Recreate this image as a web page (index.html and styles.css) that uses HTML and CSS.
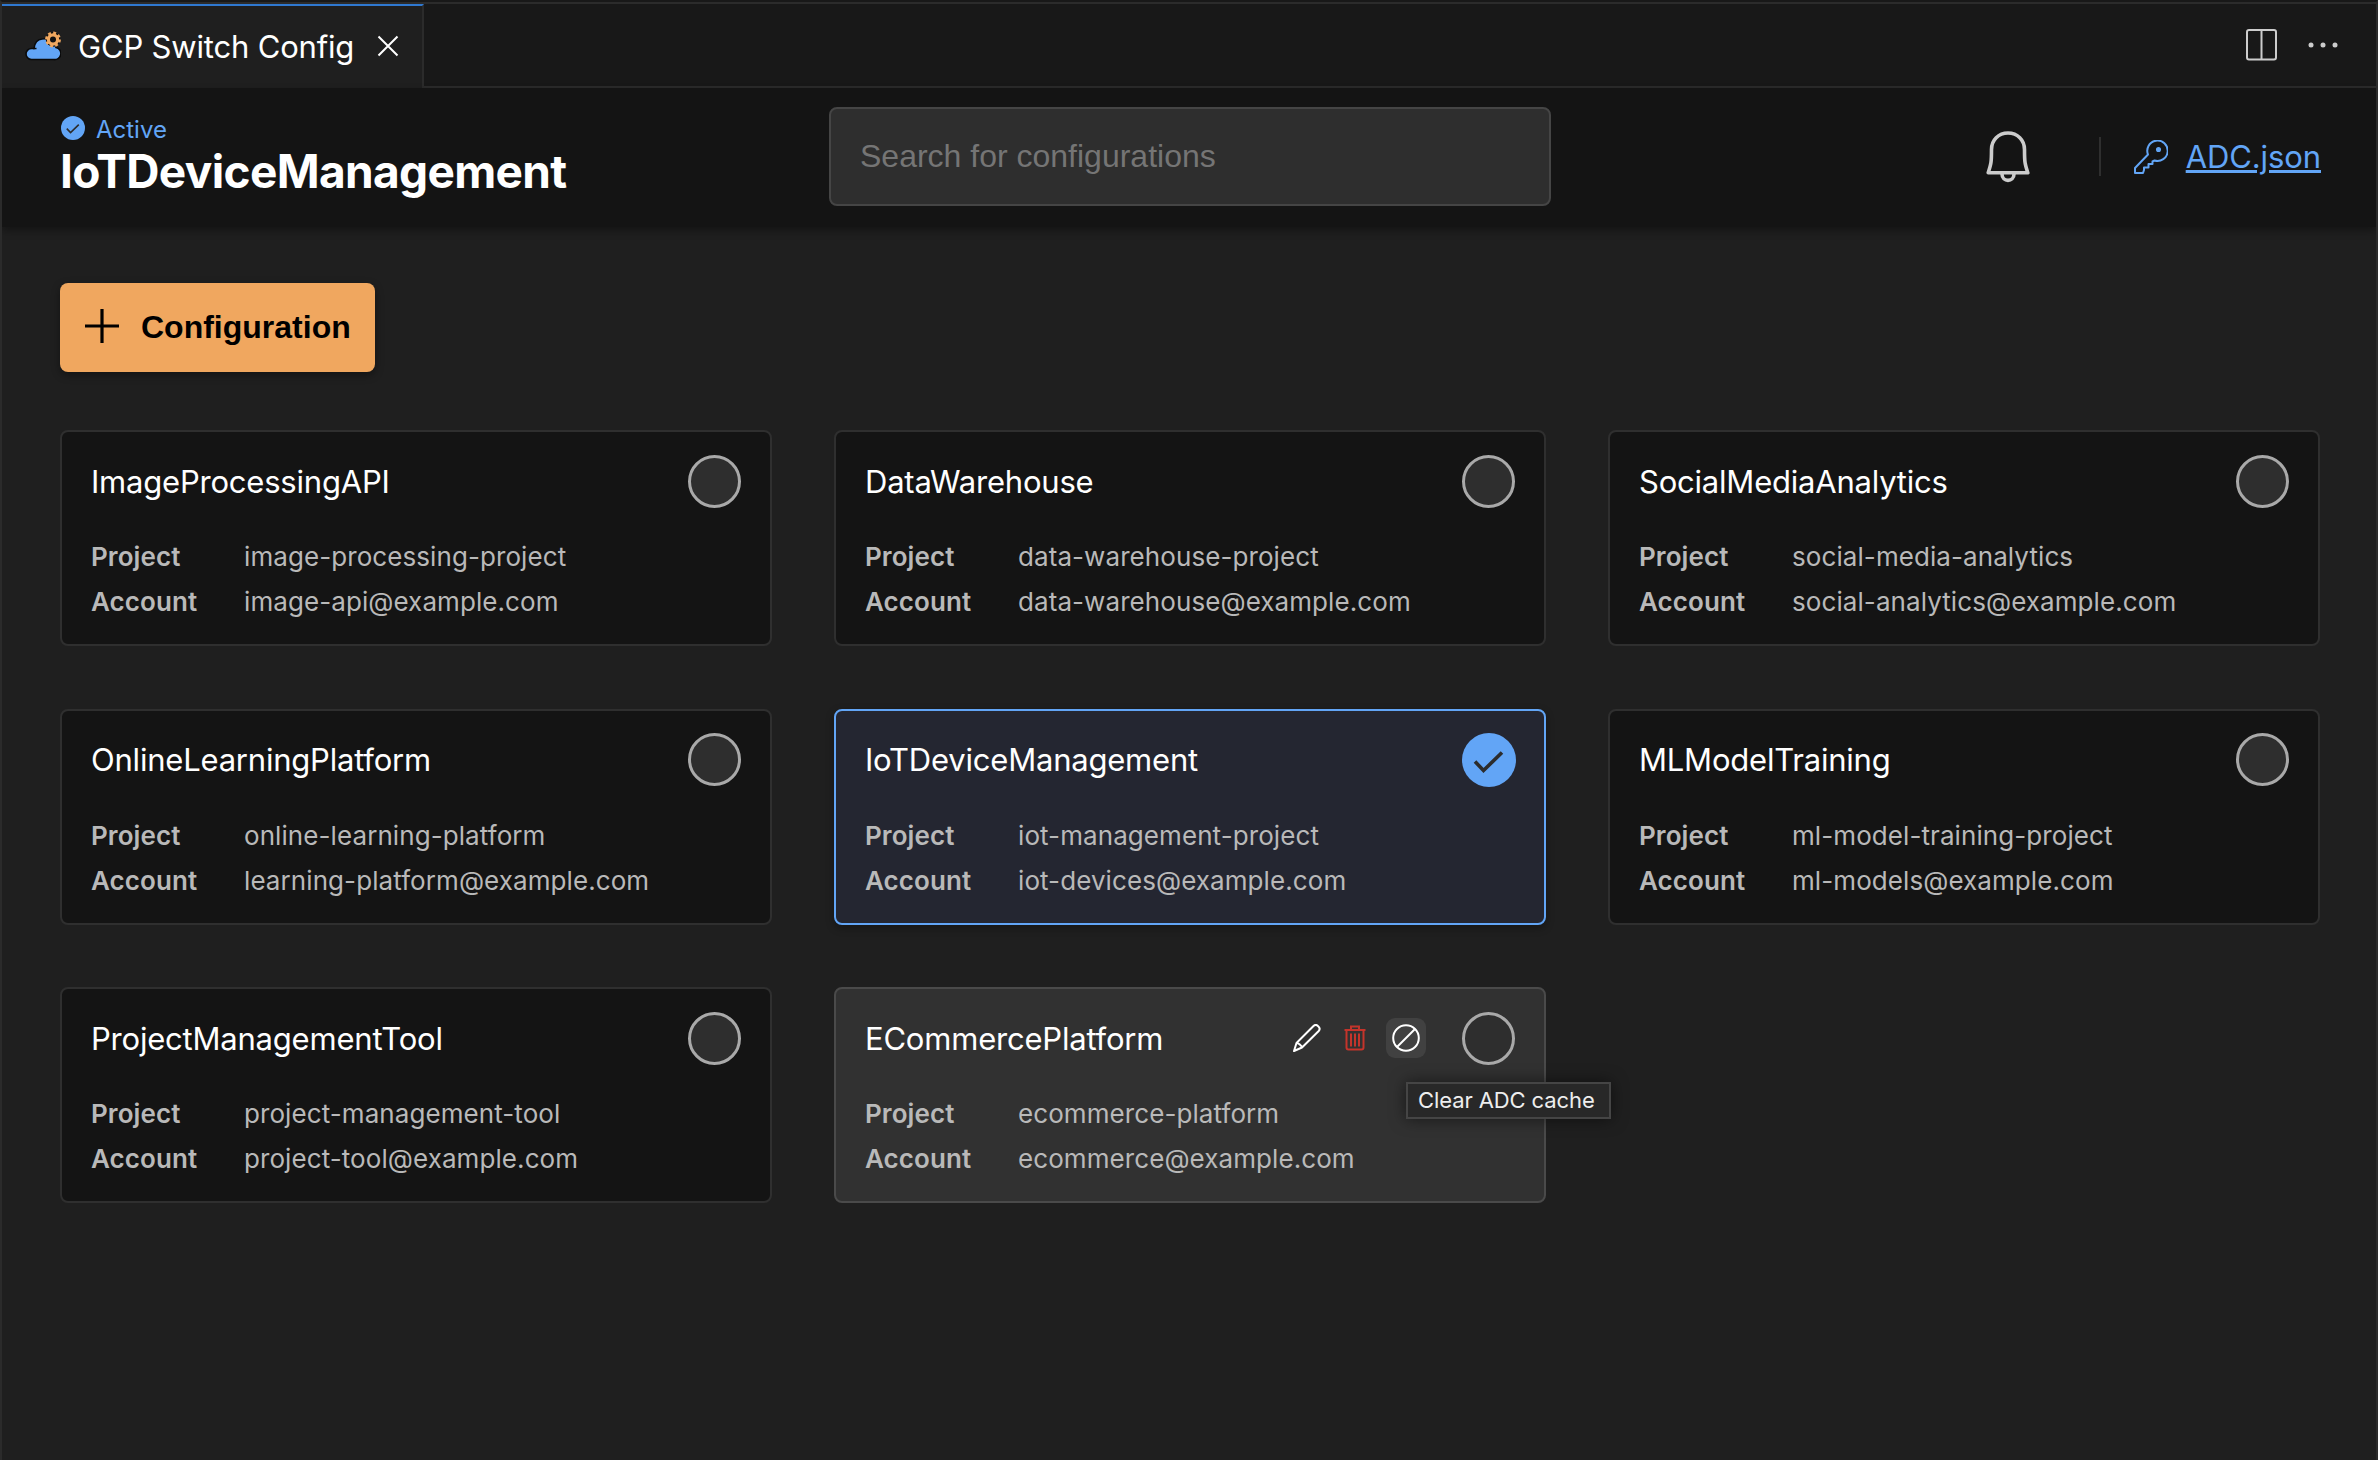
FILE: index.html
```html
<!DOCTYPE html>
<html lang="en">
<head>
<meta charset="utf-8">
<title>GCP Switch Config</title>
<link rel="stylesheet" href="styles.css">
</head>
<body>
<svg class="defs" width="0" height="0"><symbol id="check" viewBox="0 0 54 54"><circle cx="27" cy="27" r="27" fill="#62a5f6"/><path d="M13 28.5L21.5 37.500L40 19.500" fill="none" stroke="#2c2c2c" stroke-width="3.600"/></symbol></svg>
<div class="window">
<div class="tabs">
  <div class="tab">
    <svg class="tab-icon" viewBox="0 0 36 30"><path d="M6.500 28.500H28.500A6 6 0 0 0 31 16.500C29 10 23 7 17 8C12 8.500 9.500 12.500 9 17.500H6.500A5.500 5.500 0 0 0 6.500 28.500Z" fill="#62a5f6" stroke="#0a0a0a" stroke-width="1.600"/><path d="M8 17.500H11.500" stroke="#0a0a0a" stroke-width="1.500"/><circle cx="28" cy="8.500" r="7.200" fill="#0a0a0a"/><circle cx="28" cy="8.500" r="6.700" fill="none" stroke="#f0a860" stroke-width="2.400" stroke-dasharray="2.900 2.362"/><circle cx="28" cy="8.500" r="4.600" fill="#111" stroke="#f0a860" stroke-width="3.200"/></svg>
    <span class="tab-label">GCP Switch Config</span>
    <svg class="close" viewBox="0 0 22 22"><path d="M1.500 1.500L20.500 20.500M20.500 1.500L1.500 20.500" stroke="#fff" stroke-width="2"/></svg>
  </div>
  <div class="tab-actions">
    <svg width="32" height="32" viewBox="0 0 32 32" fill="none" stroke="#ccc" stroke-width="2"><rect x="1" y="1" width="29" height="29.500" rx="2"/><path d="M15.500 1V30"/></svg>
    <svg width="30" height="8" viewBox="0 0 30 8" fill="#ccc"><circle cx="3" cy="4" r="2.500"/><circle cx="15" cy="4" r="2.500"/><circle cx="27" cy="4" r="2.500"/></svg>
  </div>
</div>
<header class="header">
  <div class="current">
    <div class="status"><svg width="24" height="24"><use href="#check"/></svg><span>Active</span></div>
    <h1>IoTDeviceManagement</h1>
  </div>
  <div class="search"><span>Search for configurations</span></div>
  <div class="tools">
    <svg class="bell" viewBox="0 0 44 52" fill="none" stroke="#ccc" stroke-width="3.600" stroke-linejoin="round"><path d="M5.500 18.500C5.500 9 12.500 2 22 2S38.500 9 38.500 18.500C38.500 32 39 33 41.800 41.800H2.200C5 33 5.500 32 5.500 18.500Z"/><path d="M16 43C16 51.500 28 51.500 28 43"/></svg>
    <i class="divider"></i>
    <svg class="key" viewBox="0 0 34 34" fill="none" stroke="#62a5f6" stroke-width="2" stroke-linejoin="round"><path d="M14 14.500A10.200 10.200 0 1 1 20.500 20.500L18.500 21.500V24H14.500V27.500H10V30L9 33H1V28Z"/><circle cx="24.500" cy="9.500" r="1.800" fill="#62a5f6" stroke-width="1.500"/></svg>
    <a>ADC.json</a>
  </div>
</header>
<main>
  <button class="add"><svg width="34" height="34" viewBox="0 0 34 34"><path d="M17 0V34M0 17H34" stroke="#000" stroke-width="3.200"/></svg><span>Configuration</span></button>
  <div class="grid">
    <section class="card"><div class="card-head"><h2>ImageProcessingAPI</h2><i class="radio"></i></div><dl><dt>Project</dt><dd>image-processing-project</dd><dt>Account</dt><dd>image-api@example.com</dd></dl></section>
    <section class="card"><div class="card-head"><h2>DataWarehouse</h2><i class="radio"></i></div><dl><dt>Project</dt><dd>data-warehouse-project</dd><dt>Account</dt><dd>data-warehouse@example.com</dd></dl></section>
    <section class="card"><div class="card-head"><h2>SocialMediaAnalytics</h2><i class="radio"></i></div><dl><dt>Project</dt><dd>social-media-analytics</dd><dt>Account</dt><dd>social-analytics@example.com</dd></dl></section>
    <section class="card"><div class="card-head"><h2>OnlineLearningPlatform</h2><i class="radio"></i></div><dl><dt>Project</dt><dd>online-learning-platform</dd><dt>Account</dt><dd>learning-platform@example.com</dd></dl></section>
    <section class="card active"><div class="card-head"><h2>IoTDeviceManagement</h2><svg class="checked"><use href="#check"/></svg></div><dl><dt>Project</dt><dd>iot-management-project</dd><dt>Account</dt><dd>iot-devices@example.com</dd></dl></section>
    <section class="card"><div class="card-head"><h2>MLModelTraining</h2><i class="radio"></i></div><dl><dt>Project</dt><dd>ml-model-training-project</dd><dt>Account</dt><dd>ml-models@example.com</dd></dl></section>
    <section class="card"><div class="card-head"><h2>ProjectManagementTool</h2><i class="radio"></i></div><dl><dt>Project</dt><dd>project-management-tool</dd><dt>Account</dt><dd>project-tool@example.com</dd></dl></section>
    <section class="card hover"><div class="card-head"><h2>ECommercePlatform</h2>
      <div class="actions">
        <svg width="28" height="28" viewBox="0 0 28 28" fill="none" stroke="#fff" stroke-width="2" stroke-linejoin="round"><path d="M1 27L3.500 19L20.500 2C22 0.500 24 1 25.200 2.200C27 3.800 27 5.500 25.700 7L9 23.500ZM3.500 19C5.500 19 8.500 21.500 9 23.500"/></svg>
        <svg width="22" height="26" viewBox="0 0 22 26" fill="none" stroke="#c4342b" stroke-width="2"><path d="M0.500 5H21.500M7 5V1.500H15V5M2.500 5V22.500Q2.500 24.500 4.500 24.500H17.500Q19.500 24.500 19.500 22.500V5M7 8.500V21.500M11 8.500V21.500M15 8.500V21.500"/></svg>
        <div class="clear"><svg width="28" height="28" viewBox="0 0 28 28" fill="none" stroke="#fff" stroke-width="2"><circle cx="14" cy="14" r="12.800"/><path d="M5 23L23 5"/></svg><div class="tooltip">Clear ADC cache</div></div>
      </div>
      <i class="radio"></i></div><dl><dt>Project</dt><dd>ecommerce-platform</dd><dt>Account</dt><dd>ecommerce@example.com</dd></dl></section>
  </div>
</main>
</div>
</body>
</html>
```
FILE: styles.css
```css
* { box-sizing: border-box; }
body { margin: 0; background: #1f1f1f; color: #fff; font-family: Inter, sans-serif; }
h1, h2, dl, dd { margin: 0; }
svg { display: block; flex: none; }
.defs { position: absolute; }
.window { height: 1460px; border: 2px solid #2b2b2b; border-width: 2px 2px 0; border-top-color: #181818; overflow: hidden; }
.tabs { display: flex; height: 86px; border-top: 2px solid #2b2b2b; background: #181818; }
.tab { display: flex; align-items: center; width: 422px; padding: 0 23px 2px 23px; border-top: 2px solid #2f78d0; border-right: 2px solid #2b2b2b; background: #1f1f1f; }
.tab-icon { width: 36px; height: 30px; }
.tab-label { margin-left: 17px; font-size: 31px; letter-spacing: -0.18px; }
.close { width: 22px; height: 22px; margin-left: auto; }
.tab-actions { flex: 1; display: flex; align-items: center; justify-content: flex-end; gap: 30px; padding: 0 38px 0 0; border-bottom: 2px solid #2b2b2b; }
.header { position: relative; display: flex; height: 139px; padding: 0 55px 0 58px; background: #141414; box-shadow: 0 4px 8px #0005; }
.current { width: 769px; padding-top: 27px; }
.status { display: flex; gap: 11px; padding-left: 1px; color: #62a5f6; font-size: 24px; line-height: 30px; }
.status svg { margin-top: 1px; }
h1 { font-size: 46px; line-height: 52px; letter-spacing: -0.65px; }
.search { width: 722px; height: 99px; margin-top: 19px; padding: 1px 29px 0; border: 2px solid #454545; border-radius: 8px; background: #2e2e2e; color: #757575; font: 32px/93px "Liberation Sans", sans-serif; }
.tools { flex: 1; display: flex; align-items: center; justify-content: flex-end; padding-bottom: 2px; color: #62a5f6; font-size: 31px; letter-spacing: -0.1px; }
.bell { width: 44px; height: 52px; }
.divider { width: 2px; height: 39px; margin: 0 33px 0 69px; background: #2f2f2f; }
.key { width: 34px; height: 34px; margin-right: 18px; }
.tools a { text-decoration: underline; text-decoration-thickness: 3px; }
main { padding: 56px 56px 0 58px; }
.add { display: flex; align-items: center; gap: 22px; width: 315px; height: 89px; padding: 0 0 0 25px; border: 0; border-radius: 8px; background: #f0a75f; color: #000; font: bold 32px "Liberation Sans", sans-serif; box-shadow: 0 3px 8px #0006; }
.add svg { margin-top: -3px; }
.grid { display: grid; grid-template-columns: repeat(3, 1fr); gap: 62.500px 62px; margin-top: 58px; }
.card { height: 216px; padding: 22px 28px 22px 29px; border: 2px solid #2f2f2f; border-radius: 8px; background: #141414; }
.card.active { border-color: #62a5f6; background: #242631; box-shadow: 0 3px 8px #0005; }
.card.hover { border-color: #4a4a4a; background: #313131; }
.card-head { display: flex; align-items: center; height: 54px; }
h2 { flex: 1; font-size: 31px; font-weight: 400; letter-spacing: -0.21px; }
.radio { width: 53px; height: 53px; margin-right: 1px; border: 3px solid #a9a9a9; border-radius: 50%; background: #2e2e2e; }
.checked { width: 54px; height: 54px; }
dl { display: grid; grid-template-columns: 153px 1fr; margin-top: 26px; color: #b9b9b9; font-size: 26px; line-height: 45px; letter-spacing: 0.08px; }
dt { font-weight: 600; }
.actions { display: flex; align-items: center; margin-right: 36px; }
.actions > svg { margin-right: 23px; }
.actions > svg + svg { margin-right: 20px; }
.clear { position: relative; display: grid; place-items: center; width: 40px; height: 40px; border-radius: 9px; background: #414141; }
.tooltip { position: absolute; left: 20px; top: 64px; width: 205px; height: 37px; padding-left: 10px; border: 2px solid #454545; background: #282828; color: #eee; font-size: 22px; line-height: 33px; letter-spacing: -0.1px; white-space: nowrap; box-shadow: 0 0 16px #0008; }
```
